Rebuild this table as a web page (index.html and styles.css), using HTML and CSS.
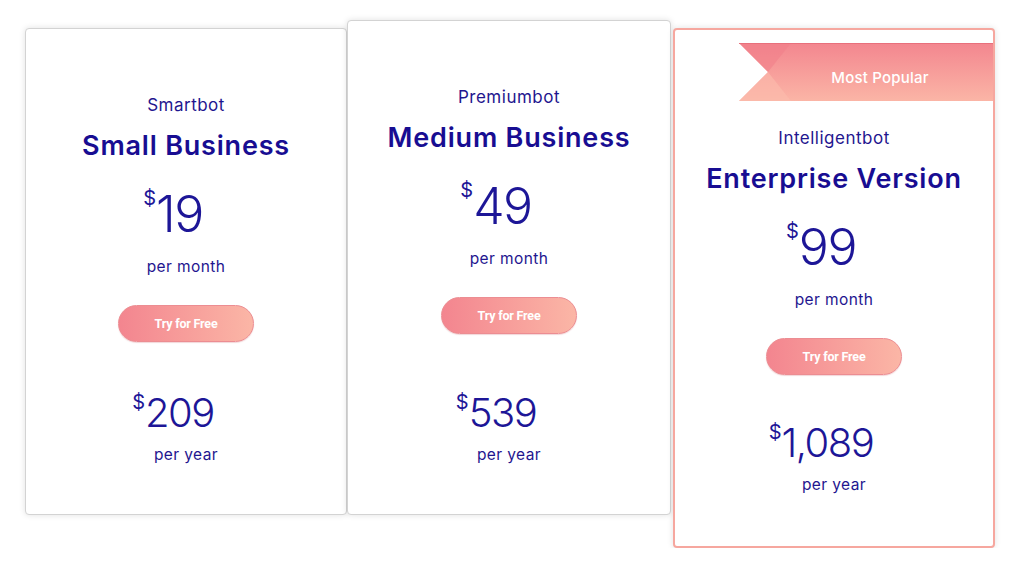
FILE: index.html
```html
<!DOCTYPE html>
<html>
<head>
<meta charset="utf-8">
<link rel="stylesheet" href="styles.css">
</head>
<body>
<div class="plans">
  <div class="card card-small">
    <div class="bot">Smartbot</div>
    <div class="title">Small Business</div>
    <div class="price"><span class="cur">$</span>19</div>
    <div class="period">per month</div>
    <button class="try">Try for Free</button>
    <div class="yearly">
      <div class="price-year"><span class="cur">$</span>209</div>
      <div class="period period-year">per year</div>
    </div>
  </div>
  <div class="card card-medium">
    <div class="bot">Premiumbot</div>
    <div class="title">Medium Business</div>
    <div class="price"><span class="cur">$</span>49</div>
    <div class="period">per month</div>
    <button class="try">Try for Free</button>
    <div class="yearly">
      <div class="price-year"><span class="cur">$</span>539</div>
      <div class="period period-year">per year</div>
    </div>
  </div>
  <div class="card card-popular">
    <div class="ribbon">
      <svg class="ribbon-bg" width="254" height="58" viewBox="0 0 254 58" preserveAspectRatio="none">
        <defs>
          <linearGradient id="rg" x1="0" y1="0" x2="0" y2="1">
            <stop offset="0" stop-color="#f3868f"/>
            <stop offset="1" stop-color="#fbb5a6"/>
          </linearGradient>
        </defs>
        <polygon points="0,0 254,0 254,58 0,58 29,29" fill="url(#rg)"/>
        <polygon points="0,0 52,0 29,29" fill="#f07d89" opacity="0.55"/>
        <polygon points="0,58 52,58 29,29" fill="#fcbcae" opacity="0.6"/>
        <line x1="0" y1="0.5" x2="254" y2="0.5" stroke="#e8707c" stroke-width="1"/>
      </svg>
      <span class="ribbon-text">Most Popular</span>
    </div>
    <div class="bot">Intelligentbot</div>
    <div class="title">Enterprise Version</div>
    <div class="price"><span class="cur">$</span>99</div>
    <div class="period">per month</div>
    <button class="try">Try for Free</button>
    <div class="yearly">
      <div class="price-year"><span class="cur">$</span>1,089</div>
      <div class="period period-year">per year</div>
    </div>
  </div>
</div>
</body>
</html>
```
FILE: styles.css
```css
* { box-sizing: border-box; }
html, body { margin: 0; padding: 0; background: #fff; }
body {
  font-family: "Inter", "Noto Sans", sans-serif;
  color: #1c1490;
}
.plans {
  display: flex;
  align-items: flex-start;
  padding: 20px 0 0 25px;
}
.card {
  position: relative;
  display: flex;
  flex-direction: column;
  align-items: center;
  background: #fff;
  border: 1px solid #d3d3d3;
  border-radius: 4px;
  box-shadow: 0 0 6px rgba(0,0,0,0.12);
  padding: 64px 0 48px;
}
.card-small { width: 322px; height: 487px; margin-top: 8px; }
.card-medium { width: 324px; height: 495px; }
.card-popular {
  width: 322px; height: 520px; margin-top: 8px; margin-left: 2px;
  border: 2px solid #f6a79f;
  padding-top: 96px;
  padding-bottom: 50px;
}
.bot {
  font-size: 17px;
  line-height: 24px;
  font-weight: 400;
  letter-spacing: 0.5px;
  color: #1f168f;
}
.title {
  margin-top: 12px;
  font-size: 27px;
  line-height: 34px;
  font-weight: 600;
  letter-spacing: 0.8px;
  color: #180d92;
}
.price {
  margin-top: 21px;
  padding-right: 26px;
  font-size: 50px;
  line-height: 60px;
  font-weight: 300;
  letter-spacing: -1.5px;
  color: #1d1697;
}
.cur {
  font-size: 20px;
  line-height: 20px;
  vertical-align: top;
  position: relative;
  top: 4px;
  margin-right: 0;
  letter-spacing: 0;
  font-weight: 400;
}
.period {
  margin-top: 12px;
  font-size: 15.5px;
  line-height: 22px;
  letter-spacing: 0.4px;
  color: #1f168f;
}
.try {
  margin-top: 27px;
  width: 136px;
  height: 37px;
  border: 1px solid #ec8d92;
  border-radius: 19px;
  background: linear-gradient(to right, #f3858f, #fbb6a6);
  color: #fff;
  font-family: "Roboto", "Liberation Sans", sans-serif;
  font-weight: 700;
  font-size: 12.5px;
  letter-spacing: -0.2px;
  padding: 0;
  box-shadow: 0 1px 1px rgba(200,90,100,0.25);
}
.yearly {
  margin-top: auto;
  display: flex;
  flex-direction: column;
  align-items: center;
}
.price-year {
  padding-right: 26px;
  font-size: 40px;
  line-height: 46px;
  font-weight: 300;
  letter-spacing: -1.5px;
  color: #1d1697;
}
.price-year .cur { top: 2px; }
.period-year { margin-top: 8px; }
.ribbon {
  position: absolute;
  top: 13px;
  right: 0;
  width: 254px;
  height: 58px;
  display: flex;
  align-items: center;
  justify-content: center;
  padding-left: 28px;
  padding-top: 10px;
}
.ribbon-bg { position: absolute; left: 0; top: 0; }
.ribbon-text {
  position: relative;
  color: #fff;
  font-size: 15px;
  font-weight: 500;
  letter-spacing: 0.2px;
}
```
